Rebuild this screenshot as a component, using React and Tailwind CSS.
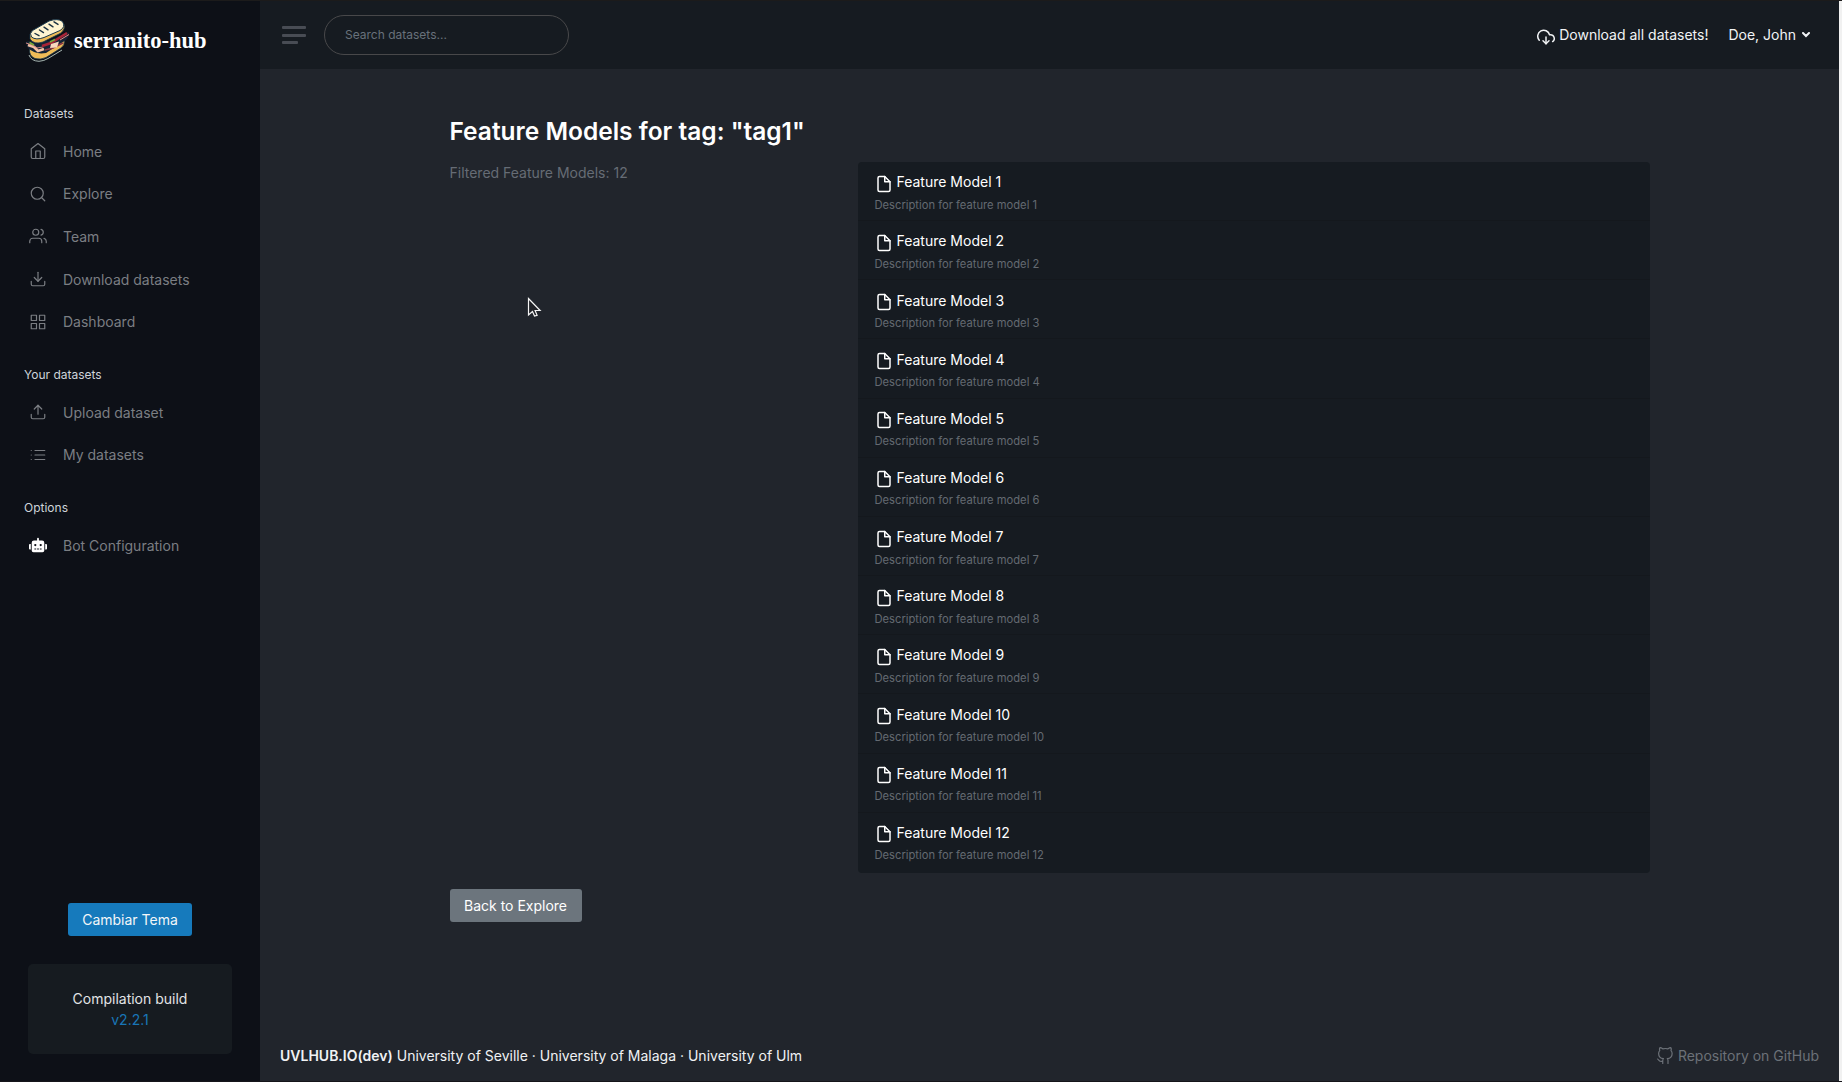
import React from "react";
import {
  FiHome, FiSearch, FiUsers, FiDownload, FiGrid, FiUpload, FiList, FiFile, FiGithub, FiDownloadCloud,
} from "react-icons/fi";
import { FaRobot } from "react-icons/fa";

const sections = [
  {
    title: "Datasets",
    items: [
      ["Home", FiHome],
      ["Explore", FiSearch],
      ["Team", FiUsers],
      ["Download datasets", FiDownload],
      ["Dashboard", FiGrid],
    ],
  },
  {
    title: "Your datasets",
    items: [
      ["Upload dataset", FiUpload],
      ["My datasets", FiList],
    ],
  },
  { title: "Options", items: [["Bot Configuration", FaRobot]] },
];

const models = Array.from({ length: 12 }, (_, i) => i + 1);

function Logo() {
  return (
    <svg className="h-[43px] w-[45px] shrink-0" viewBox="0 0 45 43" fill="none">
      <path d="M4 36 Q6 42 14 42.3 Q19 42 23 39.5 L37 31" stroke="#b9c9c4" strokeWidth="0.9" />
      <path d="M4.5 30 Q4 37 10 39.5 Q16 41 21 38.5 L36 29 Q40 26 39.5 21 L20 28 Z" fill="#efbb57" stroke="#17354a" strokeWidth="0.8" />
      <path d="M0.5 23 Q10 20 23 22 L43.5 13 Q45 17 41 21 L21 34 Q10 36 3 29 Z" fill="#142336" />
      <path d="M3 26 L9 28 L13 32 L19 30" stroke="#f2c1a4" strokeWidth="2.8" />
      <path d="M20 31 L28 29 L38 24" stroke="#8a3644" strokeWidth="1.6" />
      <path d="M1 24 L7 26 L12 29 L18 28" stroke="#e08d86" strokeWidth="0.9" />
      <path d="M17 27 L26 24 L42 14" stroke="#a92336" strokeWidth="2.6" />
      <path d="M35 21 L44 15.5" stroke="#e58a84" strokeWidth="1" />
      <path d="M4.5 23.5 L9 26 M25 23 L30 20.5" stroke="#78ac3b" strokeWidth="1.8" />
      <path d="M26 25 L34 22.5 L32 28.5 L25 29 Z" fill="#fad9bd" />
      <path d="M5 15 L5 20 Q9 26 18 23 L36 14 Q40.5 10.5 39 5 Z" fill="#efbb57" stroke="#17354a" strokeWidth="0.8" />
      <path d="M7.5 11.5 L24 2 Q33 -1 37.5 2.5 Q41 8 35 11.5 L19 18.5 Q11 21.5 6.5 18 Q4 14.5 7.5 11.5Z" fill="#fff4d1" stroke="#17354a" strokeWidth="1" />
      <path d="M10 14.5l4 2.2M14.5 11l4 2.6M19 8.2l4 2.6M24 5.2l4 2.6M29 2.8l4 2.6" stroke="#1a3042" strokeWidth="1.4" strokeLinecap="round" />
    </svg>
  );
}

function Sidebar() {
  return (
    <aside className="flex w-[260px] shrink-0 flex-col bg-[#0d1017]">
      <div className="flex h-[79px] items-center pl-[25px]">
        <Logo />
        <span className="mt-px ml-[4px] font-['Liberation_Serif',serif] text-[22.5px] font-bold leading-none text-white">serranito-hub</span>
      </div>
      <nav className="pt-[10px]">
        {sections.map((s) => (
          <div key={s.title} className="mb-2">
            <div className="flex h-[40px] items-end pb-[7px] pl-6 text-[12px] leading-[18px] text-[#ced4da]">{s.title}</div>
            {s.items.map(([label, Icon]) => (
              <a key={label} className="flex h-[42.6px] items-center pl-[29px] text-[#7b7e83]">
                {label === "Bot Configuration" ? (
                  <Icon className="size-[18px] text-white" />
                ) : (
                  <Icon className="size-[18px]" strokeWidth={1.6} />
                )}
                <span className="ml-4">{label}</span>
              </a>
            ))}
          </div>
        ))}
      </nav>
      <div className="mt-auto flex flex-col items-center pb-[27px]">
        <button className="h-[33px] w-[124px] rounded-[3px] bg-[#167abc] text-[#f3f6f8]">Cambiar Tema</button>
        <div className="mt-7 flex h-[90px] w-[204px] flex-col items-center justify-center rounded-[5px] bg-[#161b20] leading-[21px] text-[#e2e4e6]">
          <span>Compilation build</span>
          <span className="text-[#1976b7]">v2.2.1</span>
        </div>
      </div>
    </aside>
  );
}

function Topbar() {
  return (
    <header className="flex h-[68px] items-center bg-[#161b21] pl-[22px] pr-[29px]">
      <div className="flex w-6 flex-col">
        <span className="h-[3px] w-6 rounded-[1px] bg-[#484c54]" />
        <span className="mt-[5px] h-[3px] w-6 rounded-[1px] bg-[#484c54]" />
        <span className="mt-1 h-[3px] w-4 rounded-[1px] bg-[#484c54]" />
      </div>
      <div className="ml-[18px] flex h-10 w-[245px] items-center rounded-full border border-[#48484a] pb-px pl-[20px] text-[12px] text-[#68717b]">
        Search datasets...
      </div>
      <div className="ml-auto flex items-center pb-px text-[#f1f3f5]">
        <FiDownloadCloud className="relative top-[2px] size-[18px]" />
        <span className="ml-1">Download all datasets!</span>
        <span className="ml-5">Doe, John</span>
        <svg className="ml-[6px] h-[6px] w-2" viewBox="0 0 8 6" fill="none">
          <path d="M1 1l3 3 3-3" stroke="currentColor" strokeWidth="2" strokeLinecap="round" />
        </svg>
      </div>
    </header>
  );
}

export default function App() {
  return (
    <div className="relative flex h-[1082px] w-[1842px] overflow-hidden border-y border-t-[#1c1b1b] border-b-[#15151a] bg-[#f1f1f1] font-['Inter',sans-serif] text-[14px] leading-[21px]">
      <Sidebar />
      <div className="flex w-[1579px] flex-col bg-[#21252c]">
        <Topbar />
        <main className="ml-[189.5px] w-[1200px] flex-1 pt-[48px]">
          <h1 className="text-[24.5px] font-semibold leading-[29px] text-white">Feature Models for tag: "tag1"</h1>
          <div className="mt-4 flex">
            <p className="w-[408px] text-[#666c75]">Filtered Feature Models: 12</p>
            <div className="w-[792px] overflow-hidden rounded-[4px] bg-[#161b21]">
              {models.map((n) => (
                <div key={n} className="h-[59.17px] border-b border-[#14181d] px-[17px] pt-[8.7px] last:h-[60px] last:border-b-0">
                  <div className="flex h-[22px] items-center text-white">
                    <FiFile className="relative top-[2px] size-[18px]" />
                    <span className="ml-1">Feature Model {n}</span>
                  </div>
                  <div className="mt-1 text-[11.2px] leading-[17px] text-[#646a71]">Description for feature model {n}</div>
                </div>
              ))}
            </div>
          </div>
          <button className="mt-4 h-[33px] w-[132px] rounded-[3px] bg-[#6c757d] text-white">Back to Explore</button>
        </main>
        <footer className="flex h-[52px] items-center justify-between pl-5 pr-[20px] text-[#f0f2f4]">
          <p><strong className="font-semibold">UVLHUB.IO(dev)</strong> University of Seville · University of Malaga · University of Ulm</p>
          <a className="flex items-center text-[#6c7178]">
            <FiGithub className="relative top-px size-[18px]" strokeWidth={1.6} />
            <span className="ml-1">Repository on GitHub</span>
          </a>
        </footer>
      </div>
      <svg className="absolute left-[527px] top-[296px] h-[22px] w-[15px]" viewBox="0 0 15 22" fill="none">
        <path d="M1.5 1.5V18l4-3.5 2 4.5 2.6-.7-2-4.8h5Z" fill="#202227" stroke="#f5f5f5" strokeWidth="1.2" />
      </svg>
    </div>
  );
}
